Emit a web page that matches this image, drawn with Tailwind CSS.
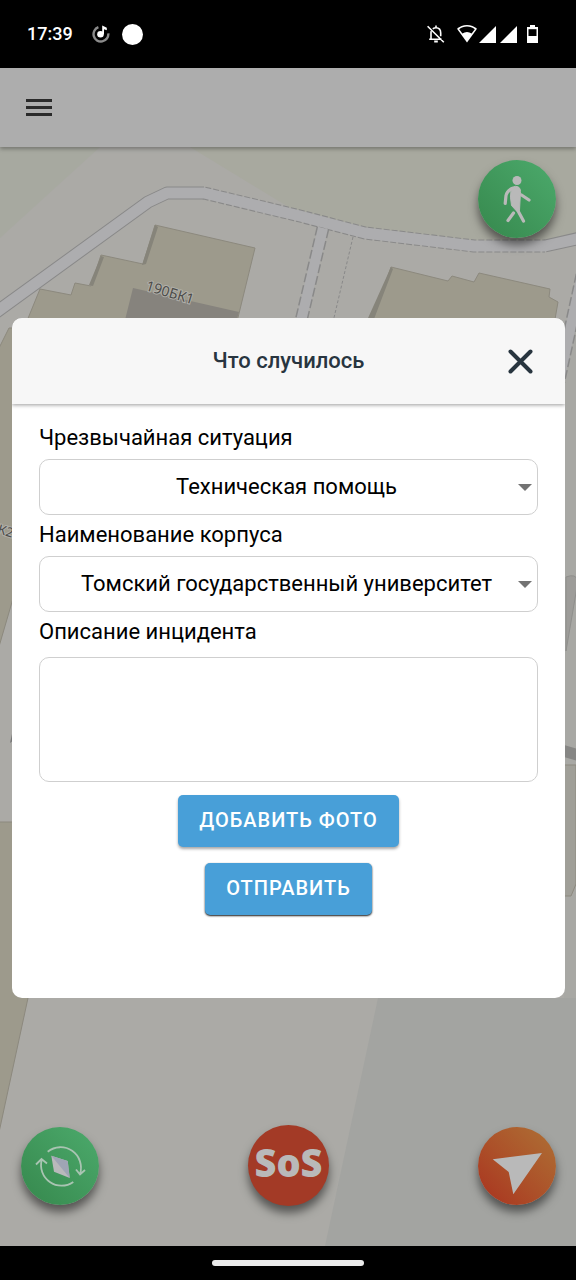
<!DOCTYPE html>
<html lang="ru">
<head>
  <meta charset="UTF-8" />
  <meta name="viewport" content="width=device-width, initial-scale=1.0" />
  <title>Что случилось</title>
  <script src="https://cdn.jsdelivr.net/npm/@tailwindcss/browser@4"></script>
</head>
<body class="flex min-h-screen flex-col bg-black font-[Roboto,sans-serif]">

  <!-- status bar -->
  <div class="flex h-[68px] shrink-0 items-center justify-between pr-[38px] pl-[27px] text-white">
    <div class="flex items-center">
      <span class="text-[18px] leading-6 font-medium">17:39</span>
      <svg class="ml-[19px] size-[18px]" viewBox="0 0 18 18" fill="none">
        <path d="M6.4 2.2A7.4 7.4 0 1 0 16.3 8.4" stroke="#8b8b8b" stroke-width="2.4" />
        <circle cx="8.5" cy="9.3" r="3.3" fill="#fff" />
        <path d="M10.2 9V.5l4.6 2.2v2.6l-2.8-1.1V9z" fill="#fff" />
      </svg>
      <span class="ml-3 size-[21px] rounded-full bg-white"></span>
    </div>
    <div class="flex items-center">
      <svg class="size-[18px]" viewBox="0 0 18 18" fill="none" stroke="#fff" stroke-width="1.6">
        <path d="M4.2 6.3C4 7 4 7.400 4 8v5.500M2.200 14.200h12.500M5.800 3.800C7 2.800 8 2.700 9 2.700c3 0 4.700 2.300 4.700 5.300v3.200M.6 1.200l16.200 16M9 .4v2.400" />
        <path d="M7.200 16.500h3.600" stroke-width="2" />
      </svg>
      <svg class="ml-3 h-[18px] w-5" viewBox="0 0 20 18">
        <path d="M10 0C6.200 0 2.700 1.400 0 3.800L10 17.500 20 3.800C17.300 1.400 13.800 0 10 0z" fill="#fff" />
        <path d="M2.200 4.300C4.400 2.600 7 1.600 10 1.600s5.600 1 7.800 2.700L14.600 8.600A8 8 0 0 0 10 7.100a8 8 0 0 0-4.600 1.500z" fill="#000" />
      </svg>
      <svg class="ml-[2px] size-[17px]" viewBox="0 0 17 17" fill="#fff"><path d="M17 0v17H0z" /></svg>
      <svg class="ml-1 size-[17px]" viewBox="0 0 17 17" fill="#fff"><path d="M17 0v17H0z" /></svg>
      <svg class="ml-[10px] h-[18px] w-[11px]" viewBox="0 0 11 18">
        <path d="M3 0h5v2h3v16H0V2h3z" fill="#fff" />
        <path d="M1.500 4.200h8v6.800h-8z" fill="#000" />
      </svg>
    </div>
  </div>

  <!-- toolbar -->
  <header class="relative z-10 flex h-[79px] shrink-0 items-center bg-[#adadad] px-[26px] shadow-[0_2px_4px_rgba(0,0,0,0.3)]">
    <button type="button" aria-label="Меню" class="flex h-[17px] w-[26px] flex-col justify-between">
      <span class="h-[3px] w-full bg-[#2a2a2a]"></span>
      <span class="h-[3px] w-full bg-[#2a2a2a]"></span>
      <span class="h-[3px] w-full bg-[#2a2a2a]"></span>
    </button>
  </header>

  <!-- map -->
  <main class="relative flex flex-1 flex-col overflow-hidden bg-[#abaaa6]">
    <svg class="absolute inset-0 size-full" viewBox="0 147 576 1099" preserveAspectRatio="xMidYMin slice" aria-hidden="true">
      <!-- grass -->
      <path d="M0 147h100L0 238z" fill="#a7a9a0" />
      <path d="M190 147h386v88l-31 6h-71l-109-12-65-15z" fill="#a8a99f" />
      <!-- paved areas -->
      <path d="M378 998h198v248H325z" fill="#a3a4a1" />
      <path d="M564 320h12v678h-12z" fill="#a5a5a2" opacity=".4" />
      <!-- roads -->
      <g fill="none" stroke="#898989" stroke-width="13" stroke-linejoin="round">
        <path d="M-5 313L148 202l19-9h37M545 246l40-9" />
        <path d="M204 193l96 23 65 17 109 13h71" stroke-dasharray="6 2" />
        <path d="M323 228l-30 127M582 275l-24 110" stroke-dasharray="9 3" />
        <path d="M353 237l-20 85" stroke-width="1" stroke-dasharray="3 2" />
      </g>
      <g fill="none" stroke="#adadaf" stroke-width="11" stroke-linejoin="round">
        <path d="M-5 313L148 202l19-9h37l96 23 65 17 109 13h71l40-9" />
        <path d="M323 228l-30 127M582 275l-24 110" stroke-width="10" />
      </g>
      <!-- buildings -->
      <g fill="#9d9a8c" stroke="#8c897e" stroke-width="1">
        <path d="M155 225l100 23-22 90H20l20-49 31 6 4-12 16 3 10-31 42 9z" />
        <path d="M391 267l57 14 4-5 22 6 5-9 71 16-1 8 9 5-7 40H365z" />
        <path d="M-2 350l11-22h10v250L-2 650z" />
        <path d="M-2 822h16v125h25L-2 1137z" />
        <path d="M576 765h-14v131h9l5-12z" fill="#a09f98" />
      </g>
      <path d="M133 288l106 24-6 20H122z" fill="#86837d" />
      <path d="M155 225l-13 40 4-1 12-37zM101 256l-12 29 4 1 11-29zM391 267l-27 60h7l22-58z" fill="#86847a" />
      <path d="M566 577q10-4 12 4l-12 70z" fill="#9d9c99" stroke="#8f8f8c" />
      <path d="M564 745l14 4v12l-14-4z" fill="#868684" />
      <path d="M14 725l-4 18 4-3z" fill="#777" />
      <g font-size="14" fill="#4d4c49" stroke="#b0afa9" stroke-width="2" paint-order="stroke" font-family="Noto Sans, sans-serif">
        <text x="145" y="290" transform="rotate(17 145 290)">190БК1</text>
        <text x="-3" y="533" font-size="13" transform="rotate(17 -3 533)">К2</text>
      </g>
    </svg>

    <div class="relative flex justify-end px-5 pt-[13px]">
      <button type="button" aria-label="Пешком" class="size-[78px] rounded-full bg-linear-to-tr from-[#36884d] to-[#4caa6c] shadow-[0_7px_10px_rgba(0,0,0,0.5)]">
        <svg class="size-full" viewBox="0 0 78 78" fill="#b9b9b9" stroke="#b9b9b9" stroke-linecap="round" stroke-linejoin="round">
          <circle cx="39" cy="20.500" r="4.500" stroke="none" />
          <path d="M33.500 27.500l4-1.200c3.500 0 5 2.200 5 5.200l-1 19-2.500 1-5.500-6-1-8z" stroke-width="1" />
          <path d="M34 28.500q-5 2.500-6 7l-.8 8M43.500 35l7.500 5" fill="none" stroke-width="3.200" />
          <path d="M39 49l6.500 12M35.500 53l-5.500 7.500" fill="none" stroke-width="3.200" />
        </svg>
      </button>
    </div>

    <!-- incident dialog -->
    <section role="dialog" aria-labelledby="dialog-title" class="relative mr-[11px] ml-3 mt-20 overflow-hidden rounded-[10px] bg-white">
      <div class="relative flex h-[86px] items-center justify-center bg-[#f7f7f7] shadow-[0_1px_4px_rgba(0,0,0,0.4)]">
        <h1 id="dialog-title" class="text-[22px] leading-7 font-medium text-[#28353f]">Что случилось</h1>
        <button type="button" aria-label="Закрыть" class="absolute right-8 size-[25px]">
          <svg class="size-full" viewBox="0 0 25 25" stroke="#28353f" stroke-width="4" stroke-linecap="round">
            <path d="M2.500 2.500l20 20M22.500 2.500l-20 20" />
          </svg>
        </button>
      </div>

      <form class="flex flex-col px-[27px] pt-[14px] pb-[83px] text-[22px] text-black">
        <label for="situation" class="h-[41px] leading-10">Чрезвычайная ситуация</label>
        <div class="relative flex items-center">
          <select id="situation" class="h-14 w-full appearance-none rounded-[10px] border border-[#cfcfcf] bg-white pr-1 pb-[2px] text-center">
            <option>Техническая помощь</option>
          </select>
          <svg class="pointer-events-none absolute right-[6px] h-[7px] w-[14px]" viewBox="0 0 14 7" fill="#737373"><path d="M0 0h14L7 7z" /></svg>
        </div>

        <label for="building" class="h-[41px] leading-10">Наименование корпуса</label>
        <div class="relative flex items-center">
          <select id="building" class="h-14 w-full appearance-none rounded-[10px] border border-[#cfcfcf] bg-white pr-1 pb-[2px] text-center">
            <option>Томский государственный университет</option>
          </select>
          <svg class="pointer-events-none absolute right-[6px] h-[7px] w-[14px]" viewBox="0 0 14 7" fill="#737373"><path d="M0 0h14L7 7z" /></svg>
        </div>

        <label for="description" class="h-[41px] leading-10">Описание инцидента</label>
        <textarea id="description" class="mt-1 h-[125px] w-full resize-none rounded-[10px] border border-[#cfcfcf] bg-white p-3"></textarea>

        <div class="mt-[13px] flex flex-col items-center gap-4 text-[20px] font-medium tracking-wider text-white">
          <button type="button" class="h-[52px] rounded-[5px] bg-[#489fd8] px-[21px] pb-[2px] shadow-[0_2px_3px_rgba(0,0,0,0.35)]">ДОБАВИТЬ ФОТО</button>
          <button type="submit" class="h-[52px] rounded-[5px] bg-[#489fd8] px-[21px] pb-[2px] shadow-[0_1px_2px_rgba(0,0,0,0.9)]">ОТПРАВИТЬ</button>
        </div>
      </form>
    </section>

    <div class="relative mt-auto flex items-center justify-between pr-5 pb-10 pl-[21px]">
      <button type="button" aria-label="Компас" class="size-[78px] rounded-full bg-linear-to-tr from-[#36884d] to-[#4caa6c] shadow-[0_7px_10px_rgba(0,0,0,0.5)]">
        <svg class="size-full" viewBox="0 0 78 78" fill="none" stroke="#a9c4b2" stroke-width="1.800">
          <path d="M26.700 24.700A20.500 20.500 0 0 1 59 47M55 42.500l4 5 5-4.500" />
          <path d="M52.300 55A20.500 20.500 0 0 1 20.700 33M15 37.500l5.500-5.500 5.500 4.500" />
          <path d="M30.300 28.700L46.700 34l2 17L33 44.700z" fill="#b9b9bb" stroke="none" />
          <path d="M30.300 28.700L46.700 34l2 17z" fill="#9fa5b5" stroke="none" />
        </svg>
      </button>
      <button type="button" class="size-[81px] rounded-full bg-[#a33a26] pb-2 font-['Open_Sans',sans-serif] text-[38px] leading-none font-extrabold text-[#b9b9b9] shadow-[0_7px_10px_rgba(0,0,0,0.5)]">SoS</button>
      <button type="button" aria-label="Моё местоположение" class="size-[78px] rounded-full bg-linear-to-tr from-[#a9301f] to-[#ad7035] shadow-[0_7px_10px_rgba(0,0,0,0.5)]">
        <svg class="size-full" viewBox="0 0 78 78" fill="#b9b9b9">
          <path d="M14.700 32.300L64 26 35.300 67.300 30.700 45z" />
        </svg>
      </button>
    </div>
  </main>

  <!-- gesture bar -->
  <div class="flex h-[34px] shrink-0 items-center justify-center">
    <span class="h-[6px] w-38 rounded-full bg-[#ebebeb]"></span>
  </div>
</body>
</html>
